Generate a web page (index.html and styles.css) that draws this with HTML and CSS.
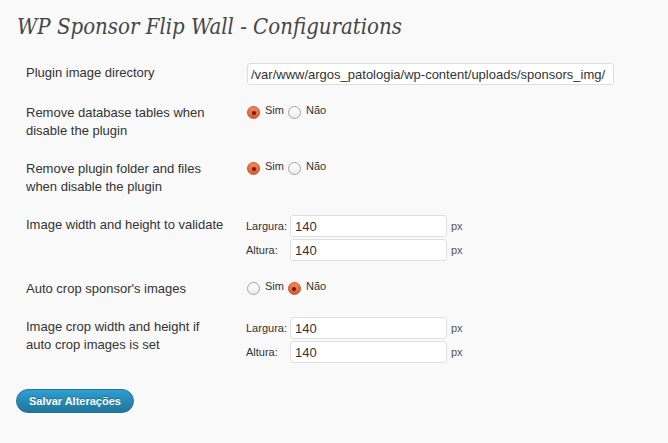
FILE: index.html
```html
<!DOCTYPE html>
<html lang="pt">
<head>
<meta charset="utf-8">
<title>WP Sponsor Flip Wall - Configurations</title>
<link rel="stylesheet" href="styles.css">
</head>
<body>
<div class="wrap">
  <h2 class="page-title">WP Sponsor Flip Wall - Configurations</h2>
  <form>
    <table class="form-table">
      <tr>
        <th>Plugin image directory</th>
        <td><input class="text wide" type="text" value="/var/www/argos_patologia/wp-content/uploads/sponsors_img/"></td>
      </tr>
      <tr>
        <th>Remove database tables when disable the plugin</th>
        <td>
          <div class="radios">
            <span class="radio checked"></span><span class="opt">Sim</span><span class="radio"></span><span class="opt">Não</span>
          </div>
        </td>
      </tr>
      <tr>
        <th>Remove plugin folder and files when disable the plugin</th>
        <td>
          <div class="radios">
            <span class="radio checked"></span><span class="opt">Sim</span><span class="radio"></span><span class="opt">Não</span>
          </div>
        </td>
      </tr>
      <tr>
        <th>Image width and height to validate</th>
        <td>
          <div class="dim-row"><span class="dim-label">Largura:</span><input class="text dim" type="text" value="140"><span class="unit">px</span></div>
          <div class="dim-row"><span class="dim-label">Altura:</span><input class="text dim" type="text" value="140"><span class="unit">px</span></div>
        </td>
      </tr>
      <tr>
        <th>Auto crop sponsor's images</th>
        <td>
          <div class="radios">
            <span class="radio"></span><span class="opt">Sim</span><span class="radio checked"></span><span class="opt">Não</span>
          </div>
        </td>
      </tr>
      <tr>
        <th>Image crop width and height if auto crop images is set</th>
        <td>
          <div class="dim-row"><span class="dim-label">Largura:</span><input class="text dim" type="text" value="140"><span class="unit">px</span></div>
          <div class="dim-row"><span class="dim-label">Altura:</span><input class="text dim" type="text" value="140"><span class="unit">px</span></div>
        </td>
      </tr>
    </table>
    <p class="submit"><button type="button" class="button-primary">Salvar Alterações</button></p>
  </form>
</div>
</body>
</html>
```
FILE: styles.css
```css
html, body {
  margin: 0;
  padding: 0;
  background: #f9f9f9;
}
body {
  font-family: "Liberation Sans", Arial, sans-serif;
  color: #333;
  font-size: 13px;
}
.wrap {
  padding: 0 0 0 16px;
}
.page-title {
  margin: 3px 0 0 0;
  padding: 9px 15px 4px 1px;
  font-family: "DejaVu Serif", Georgia, serif;
  font-stretch: condensed;
  font-style: italic;
  font-weight: normal;
  font-size: 22px;
  line-height: 29px;
  color: #464646;
}
form {
  margin: 0;
}
.form-table {
  border-collapse: collapse;
  margin-top: 9px;
}
.form-table th {
  width: 200px;
  padding: 10px;
  text-align: left;
  vertical-align: top;
  font-weight: normal;
  font-size: 13px;
  line-height: 18px;
}
.form-table td {
  padding: 8px 10px;
  vertical-align: top;
  font-size: 11px;
}
.text {
  box-sizing: border-box;
  height: 22px;
  margin: 1px;
  padding: 3px;
  border: 1px solid #dfdfdf;
  border-radius: 3px;
  background: #fff;
  font-family: "Liberation Sans", Arial, sans-serif;
  font-size: 13px;
  color: #333;
  outline: none;
}
.wide {
  width: 367px;
  margin-left: 1px;
}
.radios {
  font-size: 11px;
  line-height: 16px;
  display: block;
}
.radio {
  display: inline-block;
  box-sizing: border-box;
  width: 13px;
  height: 13px;
  border-radius: 50%;
  border: 1px solid #a3a3a3;
  background: linear-gradient(#ffffff, #ececec);
  vertical-align: -5px;
  margin: 0 5px 0 1px;
  position: relative;
}
.radio.checked {
  border-color: #c7552b;
  background: linear-gradient(#f08a5d, #e0582a);
}
.radio.checked::after {
  content: "";
  position: absolute;
  left: 3.5px;
  top: 3.5px;
  width: 4px;
  height: 4px;
  border-radius: 50%;
  background: #5a2412;
}
.opt {
  margin-right: 3px;
}
.dim-row {
  display: flex;
  align-items: center;
  height: 24px;
  font-size: 11px;
}
.dim-label {
  width: 43px;
}
.dim {
  width: 157px;
  margin: 1px 4px 1px 1px;
  padding-left: 4px;
}
.unit {
  color: #555;
}
.submit {
  margin: 17px 0 0 0;
  padding: 0;
}
.button-primary {
  height: 24px;
  padding: 0 12px;
  border: 1px solid #21759b;
  border-radius: 12px;
  background: linear-gradient(#2e9fd2, #21759b);
  color: #fff;
  font-family: "Liberation Sans", Arial, sans-serif;
  font-size: 11px;
  font-weight: bold;
  text-shadow: 0 -1px 0 rgba(0,0,0,0.3);
  margin-left: 0;
  cursor: pointer;
}
```
